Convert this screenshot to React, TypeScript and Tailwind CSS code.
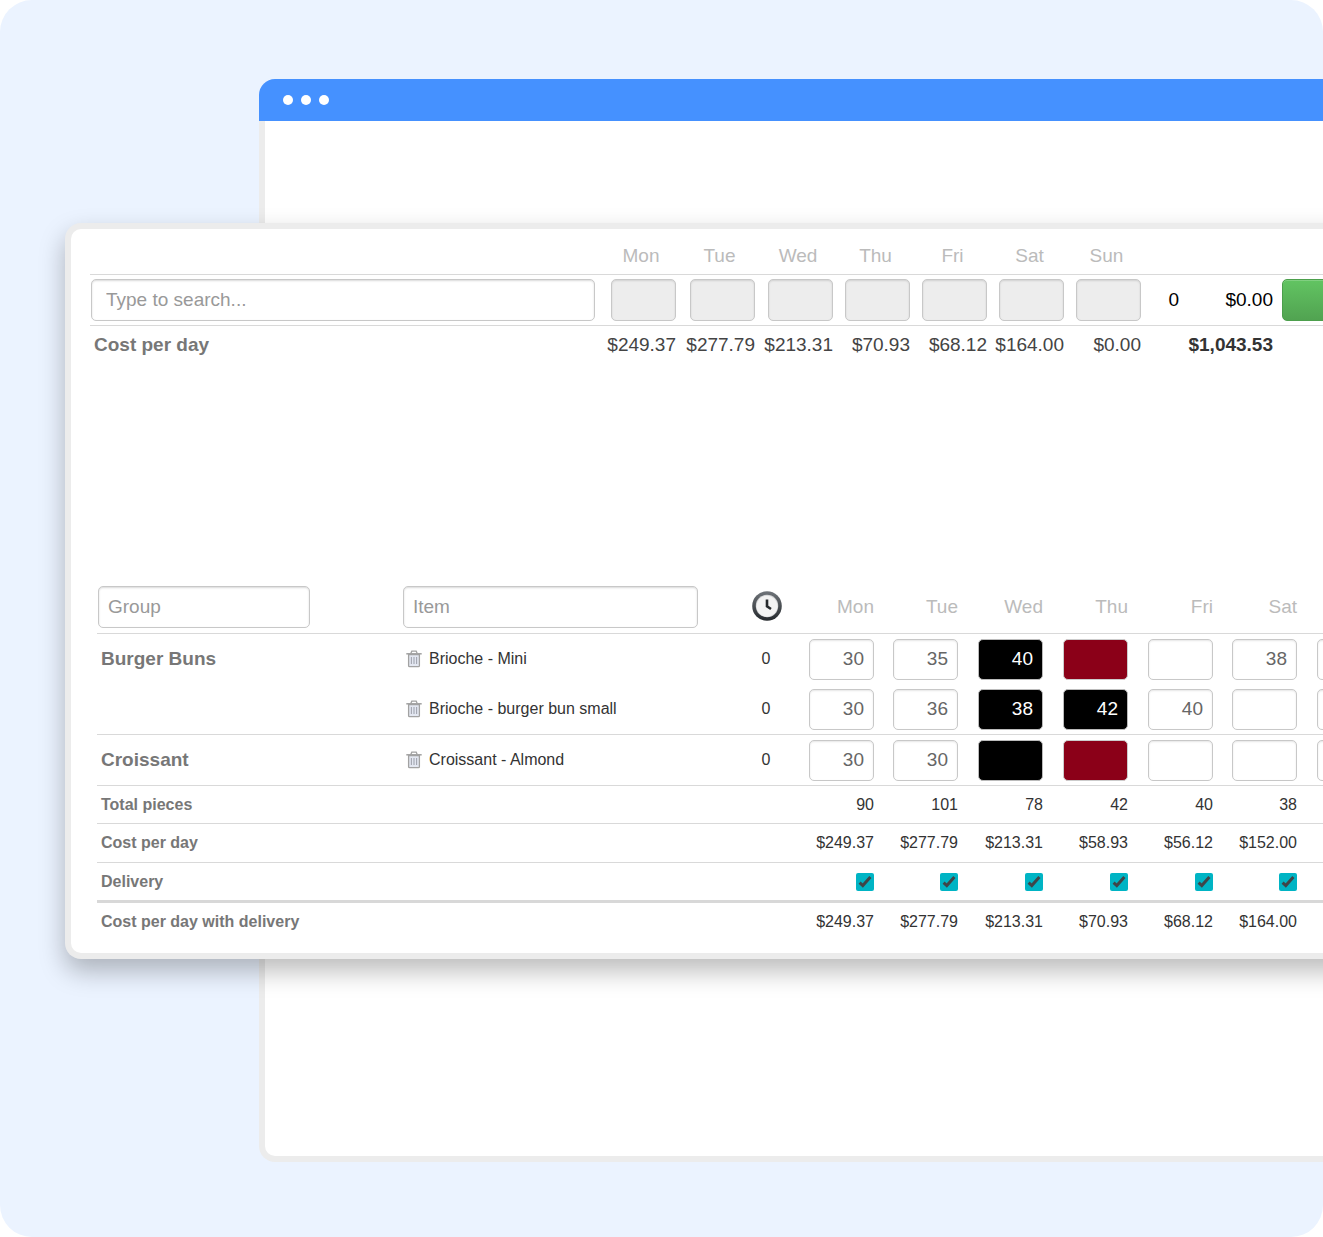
import React from 'react';

const days = ['Mon', 'Tue', 'Wed', 'Thu', 'Fri', 'Sat'];
const weekdays = [...days, 'Sun'];

type Tone = 'plain' | 'black' | 'red';
type Cell = { value: string; tone?: Tone };
type Row = { group?: string; item: string; cells: Cell[] };

const rows: Row[] = [
  {
    group: 'Burger Buns',
    item: 'Brioche - Mini',
    cells: [
      { value: '30' },
      { value: '35' },
      { value: '40', tone: 'black' },
      { value: '', tone: 'red' },
      { value: '' },
      { value: '38' },
    ],
  },
  {
    item: 'Brioche - burger bun small',
    cells: [
      { value: '30' },
      { value: '36' },
      { value: '38', tone: 'black' },
      { value: '42', tone: 'black' },
      { value: '40' },
      { value: '' },
    ],
  },
  {
    group: 'Croissant',
    item: 'Croissant - Almond',
    cells: [
      { value: '30' },
      { value: '30' },
      { value: '', tone: 'black' },
      { value: '', tone: 'red' },
      { value: '' },
      { value: '' },
    ],
  },
];

const topCosts = ['$249.37', '$277.79', '$213.31', '$70.93', '$68.12', '$164.00', '$0.00'];
const pieces = ['90', '101', '78', '42', '40', '38'];
const costs = ['$249.37', '$277.79', '$213.31', '$58.93', '$56.12', '$152.00'];
const costsWithDelivery = ['$249.37', '$277.79', '$213.31', '$70.93', '$68.12', '$164.00'];

const tones: Record<Tone, string> = {
  plain: 'bg-white text-[#666] border-[#c8c8c8] shadow-[inset_0_1px_2px_rgba(0,0,0,0.1)]',
  black: 'bg-black text-white border-[#bbb]',
  red: 'bg-[#8b0018] text-white border-[#ccc]',
};

const textField =
  'block h-[42px] rounded-[5px] border border-[#c8c8c8] bg-white text-[19px] text-[#555] placeholder:text-[#999] placeholder:opacity-100 shadow-[inset_0_1px_2px_rgba(0,0,0,0.15)] outline-none';

function ClockIcon() {
  return (
    <svg className="mx-auto block size-[30px]" viewBox="0 0 30 30" role="img" aria-label="Lead time">
      <defs>
        <linearGradient id="rim" x1="0" y1="0" x2="0" y2="1">
          <stop offset="0" stopColor="#70757a" />
          <stop offset="1" stopColor="#24282c" />
        </linearGradient>
      </defs>
      <circle cx="15" cy="15" r="14.8" fill="url(#rim)" />
      <circle cx="15" cy="15" r="11.2" fill="#d5d6d8" />
      <circle cx="15" cy="15.2" r="10.5" fill="#f3f3f3" />
      <path d="M15 8.4V15.4l4 2.6" fill="none" stroke="#26292c" strokeWidth="2.6" />
    </svg>
  );
}

function TrashIcon() {
  return (
    <svg className="block h-[18px] w-4" viewBox="0 0 16 18" fill="none" aria-hidden="true">
      <path d="M2.6 4.5h10.8v11.2q0 1-1 1H3.6q-1 0-1-1z" fill="#e3e7f1" stroke="#a2a2a2" strokeWidth="1.3" />
      <path d="M0.3 3.8h15.4" stroke="#a2a2a2" strokeWidth="1.5" />
      <path d="M4.8 3.6 5.8 1.2h4.4l1 2.4" stroke="#a2a2a2" strokeWidth="1.3" />
      <path d="M5.4 7v7M8 7v7M10.6 7v7" stroke="#a3a6b0" strokeWidth="1.1" />
    </svg>
  );
}

function DeliveryBox({ day }: { day: string }) {
  return (
    <label className="ml-auto grid size-[18px]">
      <input
        type="checkbox"
        defaultChecked
        aria-label={`Delivery on ${day}`}
        className="col-start-1 row-start-1 size-[18px] appearance-none rounded-[2px] bg-[#00b4c4]"
      />
      <svg
        className="pointer-events-none col-start-1 row-start-1 size-[18px]"
        viewBox="0 0 18 18"
        fill="none"
        aria-hidden="true"
      >
        <path d="M3.6 9.6 6.8 12.6 14.4 4" stroke="#3f4548" strokeWidth="3" />
      </svg>
    </label>
  );
}

function AddItemTable() {
  return (
    <table className="w-full min-w-[1300px] table-fixed border-separate border-spacing-0 text-[19px] leading-6">
      <colgroup>
        <col className="w-[512px]" />
        <col className="w-[78px]" />
        <col className="w-[79px]" />
        <col className="w-[78px]" />
        <col className="w-[77px]" />
        <col className="w-[77px]" />
        <col className="w-[77px]" />
        <col className="w-[77px]" />
        <col className="w-[38px]" />
        <col className="w-[94px]" />
        <col />
      </colgroup>
      <thead>
        <tr className="h-[37px]">
          <td />
          {weekdays.map((d) => (
            <th key={d} scope="col" className="text-center font-normal text-[#bbb]">
              {d}
            </th>
          ))}
          <td colSpan={3} />
        </tr>
      </thead>
      <tbody>
        <tr className="h-[51px] *:border-t *:border-[#d9d9d9]">
          <td className="pr-[7px] pl-px">
            <input
              type="text"
              aria-label="Search items"
              placeholder="Type to search..."
              className={`${textField} w-full px-3.5`}
            />
          </td>
          {weekdays.map((d) => (
            <td key={d} className="pr-1">
              <input
                type="text"
                disabled
                aria-label={`Quantity for ${d}`}
                className="ml-auto block h-[42px] w-[65px] rounded-[5px] border border-[#c8c8c8] bg-[#ededed] shadow-[inset_0_1px_2px_rgba(0,0,0,0.12)]"
              />
            </td>
          ))}
          <td className="pr-1 text-right text-black">0</td>
          <td className="pr-1 text-right text-black">$0.00</td>
          <td className="pl-[5px]">
            <button
              type="button"
              aria-label="Add item"
              className="block h-[42px] w-full rounded-[5px] border border-[#4c9f4c] bg-linear-to-b from-[#62c462] to-[#51a351] shadow-[inset_0_1px_0_rgba(255,255,255,0.2)]"
            />
          </td>
        </tr>
        <tr className="h-[38px] *:border-t *:border-[#d9d9d9]">
          <th scope="row" className="pl-1 text-left font-bold text-[#777]">
            Cost per day
          </th>
          {topCosts.map((c, i) => (
            <td key={weekdays[i]} className="pr-1 text-right text-[#444]">
              {c}
            </td>
          ))}
          <td colSpan={2} className="pr-1 text-right font-bold text-[#333]">
            $1,043.53
          </td>
          <td />
        </tr>
      </tbody>
    </table>
  );
}

function SummaryRow({ label, values }: { label: string; values: React.ReactNode[] }) {
  return (
    <>
      <th scope="row" colSpan={3} className="pl-1 text-left font-bold text-[#777]">
        {label}
      </th>
      {values.map((v, i) => (
        <td key={days[i]} className="pr-1 text-right text-[#333]">
          {v}
        </td>
      ))}
      <td />
    </>
  );
}

function OrderTable() {
  return (
    <table className="w-full min-w-[1300px] table-fixed border-separate border-spacing-0 text-[16px] leading-5">
      <colgroup>
        <col className="w-[306px]" />
        <col className="w-[336px]" />
        <col className="w-[54px]" />
        <col className="w-[85px]" />
        <col className="w-[84px]" />
        <col className="w-[85px]" />
        <col className="w-[85px]" />
        <col className="w-[85px]" />
        <col className="w-[84px]" />
        <col />
      </colgroup>
      <thead>
        <tr className="h-[52px]">
          <th className="pl-px">
            <input
              type="text"
              aria-label="Group"
              placeholder="Group"
              className={`${textField} w-[212px] px-[9px] font-normal`}
            />
          </th>
          <th>
            <input
              type="text"
              aria-label="Item"
              placeholder="Item"
              className={`${textField} w-[295px] px-[9px] font-normal`}
            />
          </th>
          <th className="pb-0.5 pl-0.5">
            <ClockIcon />
          </th>
          {days.map((d) => (
            <th key={d} scope="col" className="pr-1 text-right text-[19px] font-normal text-[#bbb]">
              {d}
            </th>
          ))}
          <th aria-label="Sunday" />
        </tr>
      </thead>
      <tbody>
        {rows.map((r) => (
          <tr
            key={r.item}
            className={r.group ? 'h-[51px] *:border-t *:border-[#d9d9d9]' : 'h-[50px]'}
          >
            <th scope="row" className="pl-1 text-left text-[19px] font-bold text-[#777]">
              {r.group}
            </th>
            <td className="pl-[3px] text-[#333]">
              <div className="flex items-center gap-[7px]">
                <button type="button" aria-label={`Remove ${r.item}`}>
                  <TrashIcon />
                </button>
                {r.item}
              </div>
            </td>
            <td className="text-center text-[#333]">0</td>
            {r.cells.map((c, i) => (
              <td key={days[i]} className="pr-1">
                <input
                  type="text"
                  defaultValue={c.value}
                  aria-label={`${r.item}, ${days[i]}`}
                  className={`ml-auto block h-[41px] w-[65px] rounded-[5px] border px-[9px] text-right text-[19px] outline-none ${tones[c.tone ?? 'plain']}`}
                />
              </td>
            ))}
            <td className="pl-4">
              <input
                type="text"
                aria-label={`${r.item}, Sun`}
                className={`block h-[41px] w-[65px] rounded-[5px] border px-[9px] outline-none ${tones.plain}`}
              />
            </td>
          </tr>
        ))}
        <tr className="h-[38px] *:border-t *:border-[#d9d9d9]">
          <SummaryRow label="Total pieces" values={pieces} />
        </tr>
        <tr className="h-[39px] *:border-t *:border-[#d9d9d9]">
          <SummaryRow label="Cost per day" values={costs} />
        </tr>
        <tr className="h-[38px] *:border-t *:border-[#d9d9d9]">
          <SummaryRow label="Delivery" values={days.map((d) => <DeliveryBox key={d} day={d} />)} />
        </tr>
        <tr className="h-[41px] *:border-t-[3px] *:border-[#d8d8d8]">
          <SummaryRow label="Cost per day with delivery" values={costsWithDelivery} />
        </tr>
      </tbody>
    </table>
  );
}

export default function App() {
  return (
    <main className="grid overflow-hidden rounded-[32px] bg-[#ebf3ff] pt-[79px] pb-[75px] font-['Liberation_Sans',Arial,sans-serif]">
      <div className="col-start-1 row-start-1 ml-[259px] flex min-h-[1083px] min-w-0 flex-col">
        <div className="flex h-[42px] items-center gap-2 rounded-tl-2xl bg-[#4591ff] pl-6">
          <span className="size-2.5 rounded-full bg-white" />
          <span className="size-2.5 rounded-full bg-white" />
          <span className="size-2.5 rounded-full bg-white" />
        </div>
        <div className="grow rounded-bl-2xl border-b-[6px] border-l-[6px] border-[#ececec] bg-white" />
      </div>
      <section className="col-start-1 row-start-1 mt-36 -mr-12 ml-[65px] min-w-0 self-start overflow-hidden rounded-l-2xl border-y-[6px] border-l-[6px] border-[#ececec] bg-white pt-2 pb-3 shadow-[0_12px_26px_rgba(0,0,0,0.27)]">
        <div className="pl-[19px]">
          <AddItemTable />
        </div>
        <div className="mt-[218px] pl-[26px]">
          <OrderTable />
        </div>
      </section>
    </main>
  );
}
